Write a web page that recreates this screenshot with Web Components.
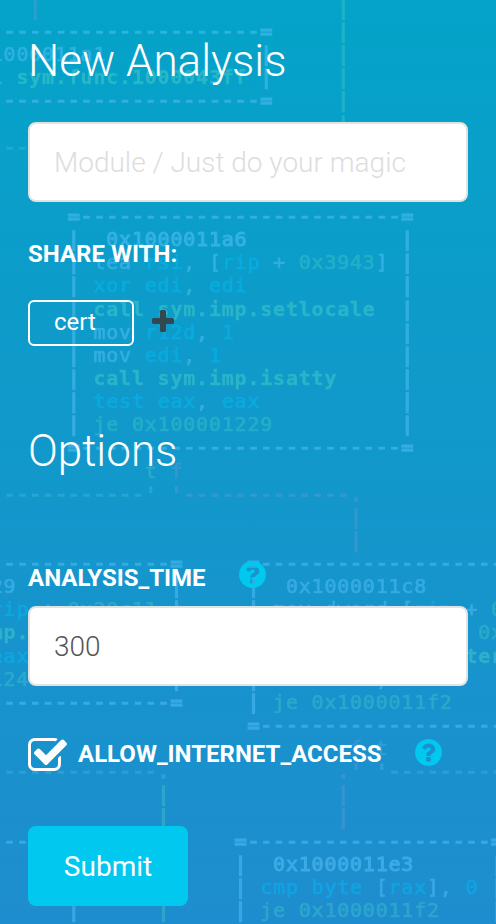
<!DOCTYPE html>
<html lang="en">
<head>
<meta charset="utf-8">
<title>New Analysis</title>
<style>
html,body{margin:0;padding:0}
body{width:496px;height:924px;overflow:hidden;font-family:Roboto,"Liberation Sans",sans-serif;color:#fff}
</style>
</head>
<body>
<analysis-page></analysis-page>
<script>
const ICONS = {
  question: {box:'0 -1408 1536 1536', d:'M896 160v192q0 14-9 23t-23 9h-192q-14 0-23-9t-9-23v-192q0-14 9-23t23-9h192q14 0 23 9t9 23zM1152 832q0 88-55.5 163t-138.5 116t-170 41q-243 0-371-213q-15-24 8-42l132-100q7-6 19-6q16 0 25 12q53 68 86 92q34 24 86 24q48 0 85.5-26t37.5-59q0-38-20-61t-68-45q-63-28-115.5-86.5t-52.5-125.5v-36q0-14 9-23t23-9h192q14 0 23 9t9 23q0 19 21.5 49.5t54.5 49.5q32 18 49 28.5t46 35t44.5 48t28 60.5t12.5 81zM1536 640q0-209-103-385.5t-279.5-279.5t-385.5-103t-385.5 103t-279.5 279.5t-103 385.5t103 385.5t279.5 279.5t385.5 103t385.5-103t279.5-279.5t103-385.5z'},
  check: {box:'0 -1408 1664 1408', d:'M1408 606v-318q0-119-84.5-203.5t-203.5-84.5h-832q-119 0-203.5 84.5t-84.5 203.5v832q0 119 84.5 203.5t203.5 84.5h832q63 0 117-25q15-7 18-23q3-17-9-29l-49-49q-10-10-23-10q-3 0-9 2q-23 6-45 6h-832q-66 0-113-47t-47-113v-832q0-66 47-113t113-47h832q66 0 113 47t47 113v254q0 13 9 22l64 64q10 10 23 10q6 0 12-3q20-8 20-29zM1639 1095l-814-814q-24-24-57-24t-57 24l-430 430q-24 24-24 57t24 57l110 110q24 24 57 24t57-24l263-263l647 647q24 24 57 24t57-24l110-110q24-24 24-57t-24-57z'},
  plus: {box:'0 -1408 1408 1408', d:'M1408 800v-192q0-40-28-68t-68-28h-416v-416q0-40-28-68t-68-28h-192q-40 0-68 28t-28 68v416h-416q-40 0-68 28t-28 68v192q0 40 28 68t68 28h416v416q0 40 28 68t68 28h192q40 0 68-28t28-68v-416h416q40 0 68-28t28-68z'}
};

class UiIcon extends HTMLElement {
  connectedCallback() {
    const i = ICONS[this.getAttribute('name')];
    this.attachShadow({mode:'open'}).innerHTML = `
      <style>:host{display:block;flex:none}svg{display:block;width:100%;height:100%}</style>
      <svg viewBox="${i.box}" fill="currentColor"><path transform="scale(1,-1)" d="${i.d}"/></svg>`;
  }
}

/* Disassembly graph behind the form: [row, column, tone, text] on a character grid. */
const D = n => '-'.repeat(n);
const GRAPH = [
  [-1,2,'p','|'],
  [0,0,'w',D(20)+'='],
  [1,-1,'w','1000011a1'],[1,20,'w','|'],
  [2,-1,'gb','l sym.func.1000043ff'],[2,20,'w','|'],
  [3,0,'w',D(20)+'='],
  [5,0,'t',D(2)],
  [8,5,'w','='+D(25)+'='],
  [9,8,'wb','0x1000011a6'],
  [10,7,'w','lea'],[10,11,'c','rsi'],[10,14,'w',', ['],[10,17,'c','rip'],[10,21,'w','+'],[10,23,'g','0x3943'],[10,29,'w',']'],
  [11,7,'c','xor edi'],[11,14,'w',','],[11,16,'c','edi'],
  [12,7,'gb','call sym.imp.setlocale'],
  [13,7,'w','mov'],[13,11,'c','r12d'],[13,15,'w',','],[13,17,'c','1'],
  [14,7,'w','mov'],[14,11,'c','edi'],[14,14,'w',','],[14,16,'c','1'],
  [15,7,'gb','call sym.imp.isatty'],
  [16,7,'c','test eax'],[16,15,'w',','],[16,17,'c','eax'],
  [17,7,'g','je 0x100001229'],
  [18,5,'w','='+D(25)+'='],
  [19,11,'g','t'],[19,13,'p','f'],
  [20,0,'t',D(11)+"'"],[20,13,'p',"'"+D(13)+'.'],
  [21,27,'p','|'],[22,27,'p','|'],
  [23,0,'w',D(13)+'='],[23,19,'w','='+D(19)],
  [24,-1,'w','29'],[24,22,'w','0x1000011c8'],
  [25,-1,'c','rip'],[25,3,'w','+'],[25,5,'g','0x20c11'],[25,21,'w','mov dword ['],[25,32,'c','rip'],[25,36,'w','+'],[25,38,'g','0'],
  [26,-1,'gb','mp.'],[26,37,'g','0x'],
  [27,-1,'c','eax'],[27,36,'gb','ter'],
  [28,-1,'g','124'],[28,29,'w',','],
  [29,0,'w',D(13)+'='],[29,21,'g','je 0x1000011f2'],
  [30,19,'w','='+D(19)],
  [31,27,'p','f'],[31,29,'t','t'],
  [32,0,'t',D(12)+'.'],[32,26,'p',".'"],[32,29,'t',"'"+D(9)],
  [33,26,'p','|'],[34,26,'p','|'],
  [35,0,'w',D(5)+'='],[35,18,'w','='+D(19)+'='],
  [36,21,'wb','0x1000011e3'],
  [37,20,'c','cmp byte'],[37,29,'w','['],[37,30,'c','rax'],[37,33,'w','],'],[37,36,'c','0'],
  [38,20,'g','je 0x1000011f2']
];
const bars = (from, to, col, tone) => { for (let r = from; r <= to; r++) GRAPH.push([r,col,tone,'|']); };
bars(-1,4,26,'g'); bars(9,17,5,'w'); bars(9,17,31,'w'); bars(24,28,13,'w'); bars(24,29,19,'w');
bars(33,38,12,'g'); bars(36,38,18,'w'); bars(36,38,38,'w'); bars(38,38,5,'w');

class CodeBackdrop extends HTMLElement {
  connectedCallback() {
    const cw = 12.83, rh = 23.13;
    const text = GRAPH.map(([r,c,t,s]) => {
      const xs = [...s].map((_, i) => (3.6 + cw*(c+i)).toFixed(1)).join(' ');
      const line = /^[-=|.']+$/.test(s) ? 'l' : '';
      return `<text class="${t[0]} ${t[1]||''} ${line}" x="${xs}" y="${(38 + rh*r).toFixed(1)}">${s}</text>`;
    }).join('');
    this.attachShadow({mode:'open'}).innerHTML = `
      <style>
        :host{position:absolute;inset:0;z-index:0;overflow:hidden;background:linear-gradient(#04a3c8,#1298cb 50%,#1e8dcf)}
        svg{display:block;filter:blur(.75px)}
        text{font:20px "DejaVu Sans Mono",monospace;white-space:pre;stroke-width:.7}
        .w{fill:rgb(90,195,250);stroke:rgb(90,195,250);opacity:.48}
        .c{fill:rgb(0,190,248);stroke:rgb(0,190,248);opacity:.46}
        .g{fill:rgb(70,205,200);stroke:rgb(70,205,200);opacity:.38}
        .t{fill:rgb(80,190,220);stroke:rgb(80,190,220);opacity:.35}
        .p{fill:rgb(110,155,215);stroke:rgb(110,155,215);opacity:.36}
        .l{stroke-width:1.5}
        .g.b{font-weight:bold;stroke-width:.3;opacity:.5}
        .w.b{stroke-width:1.1;opacity:.52}
      </style>
      <svg width="496" height="924" aria-hidden="true">${text}</svg>`;
  }
}

class TextField extends HTMLElement {
  connectedCallback() {
    const v = this.getAttribute('value'), p = this.getAttribute('placeholder');
    this.attachShadow({mode:'open'}).innerHTML = `
      <style>
        :host{display:flex;align-items:center;box-sizing:border-box;height:80px;padding:2px 24px 0;background:#fff;border:2px solid #e2e2e2;border-radius:8px;font-size:28px;font-weight:300;line-height:40px;color:#555}
        .ph{color:#ddd}
      </style><span class="${v?'':'ph'}">${v||p}</span>`;
  }
}

class FieldLabel extends HTMLElement {
  connectedCallback() {
    this.attachShadow({mode:'open'}).innerHTML = `
      <style>:host{display:block;font-size:24px;line-height:28px;font-weight:700;white-space:nowrap}</style><slot></slot>`;
  }
}

class GroupTag extends HTMLElement {
  connectedCallback() {
    this.attachShadow({mode:'open'}).innerHTML = `
      <style>:host{display:flex;box-sizing:border-box;width:106px;height:46px;border:2px solid #fff;border-radius:6px;padding-left:24px;font-size:24px;line-height:40px}</style><slot></slot>`;
  }
}

class SubmitButton extends HTMLElement {
  connectedCallback() {
    this.attachShadow({mode:'open'}).innerHTML = `
      <style>:host{display:flex;align-items:center;justify-content:center;width:160px;height:80px;border-radius:8px;background:#00c8ef;font-size:28px}</style><slot></slot>`;
  }
}

class AnalysisPage extends HTMLElement {
  connectedCallback() {
    this.attachShadow({mode:'open'}).innerHTML = `
      <style>
        :host{display:block;position:relative;width:496px;height:924px;overflow:hidden}
        main{position:relative;z-index:1;display:flex;flex-direction:column;padding:35px 28px 0}
        h1{margin:0;font-size:44px;line-height:52px;font-weight:300;white-space:nowrap}
        .row{display:flex;align-items:center}
        .help{width:27px;height:27px;color:#00c8ef}
        .plus{width:22px;height:22px;color:#33474f;margin:-4px 0 0 18px}
        .check{width:39px;height:33px}
      </style>
      <code-backdrop></code-backdrop>
      <main>
        <h1>New Analysis</h1>
        <text-field style="margin-top:35px" placeholder="Module / Just do your magic"></text-field>
        <field-label style="margin-top:38px">SHARE WITH:</field-label>
        <div class="row" style="margin-top:32px"><group-tag>cert</group-tag><ui-icon class="plus" name="plus"></ui-icon></div>
        <h1 style="margin-top:79px">Options</h1>
        <div class="row" style="margin-top:87px"><field-label>ANALYSIS_TIME</field-label><ui-icon class="help" style="margin:-7px 0 0 33px" name="question"></ui-icon></div>
        <text-field style="margin-top:14px" value="300"></text-field>
        <div class="row" style="margin-top:52px"><ui-icon class="check" name="check"></ui-icon><field-label style="margin:-2px 0 0 11px">ALLOW_INTERNET_ACCESS</field-label><ui-icon class="help" style="margin:-5px 0 0 33px" name="question"></ui-icon></div>
        <submit-button style="margin-top:55px">Submit</submit-button>
      </main>`;
  }
}
customElements.define('ui-icon', UiIcon);
customElements.define('code-backdrop', CodeBackdrop);
customElements.define('text-field', TextField);
customElements.define('field-label', FieldLabel);
customElements.define('group-tag', GroupTag);
customElements.define('submit-button', SubmitButton);
customElements.define('analysis-page', AnalysisPage);
</script>
</body>
</html>
